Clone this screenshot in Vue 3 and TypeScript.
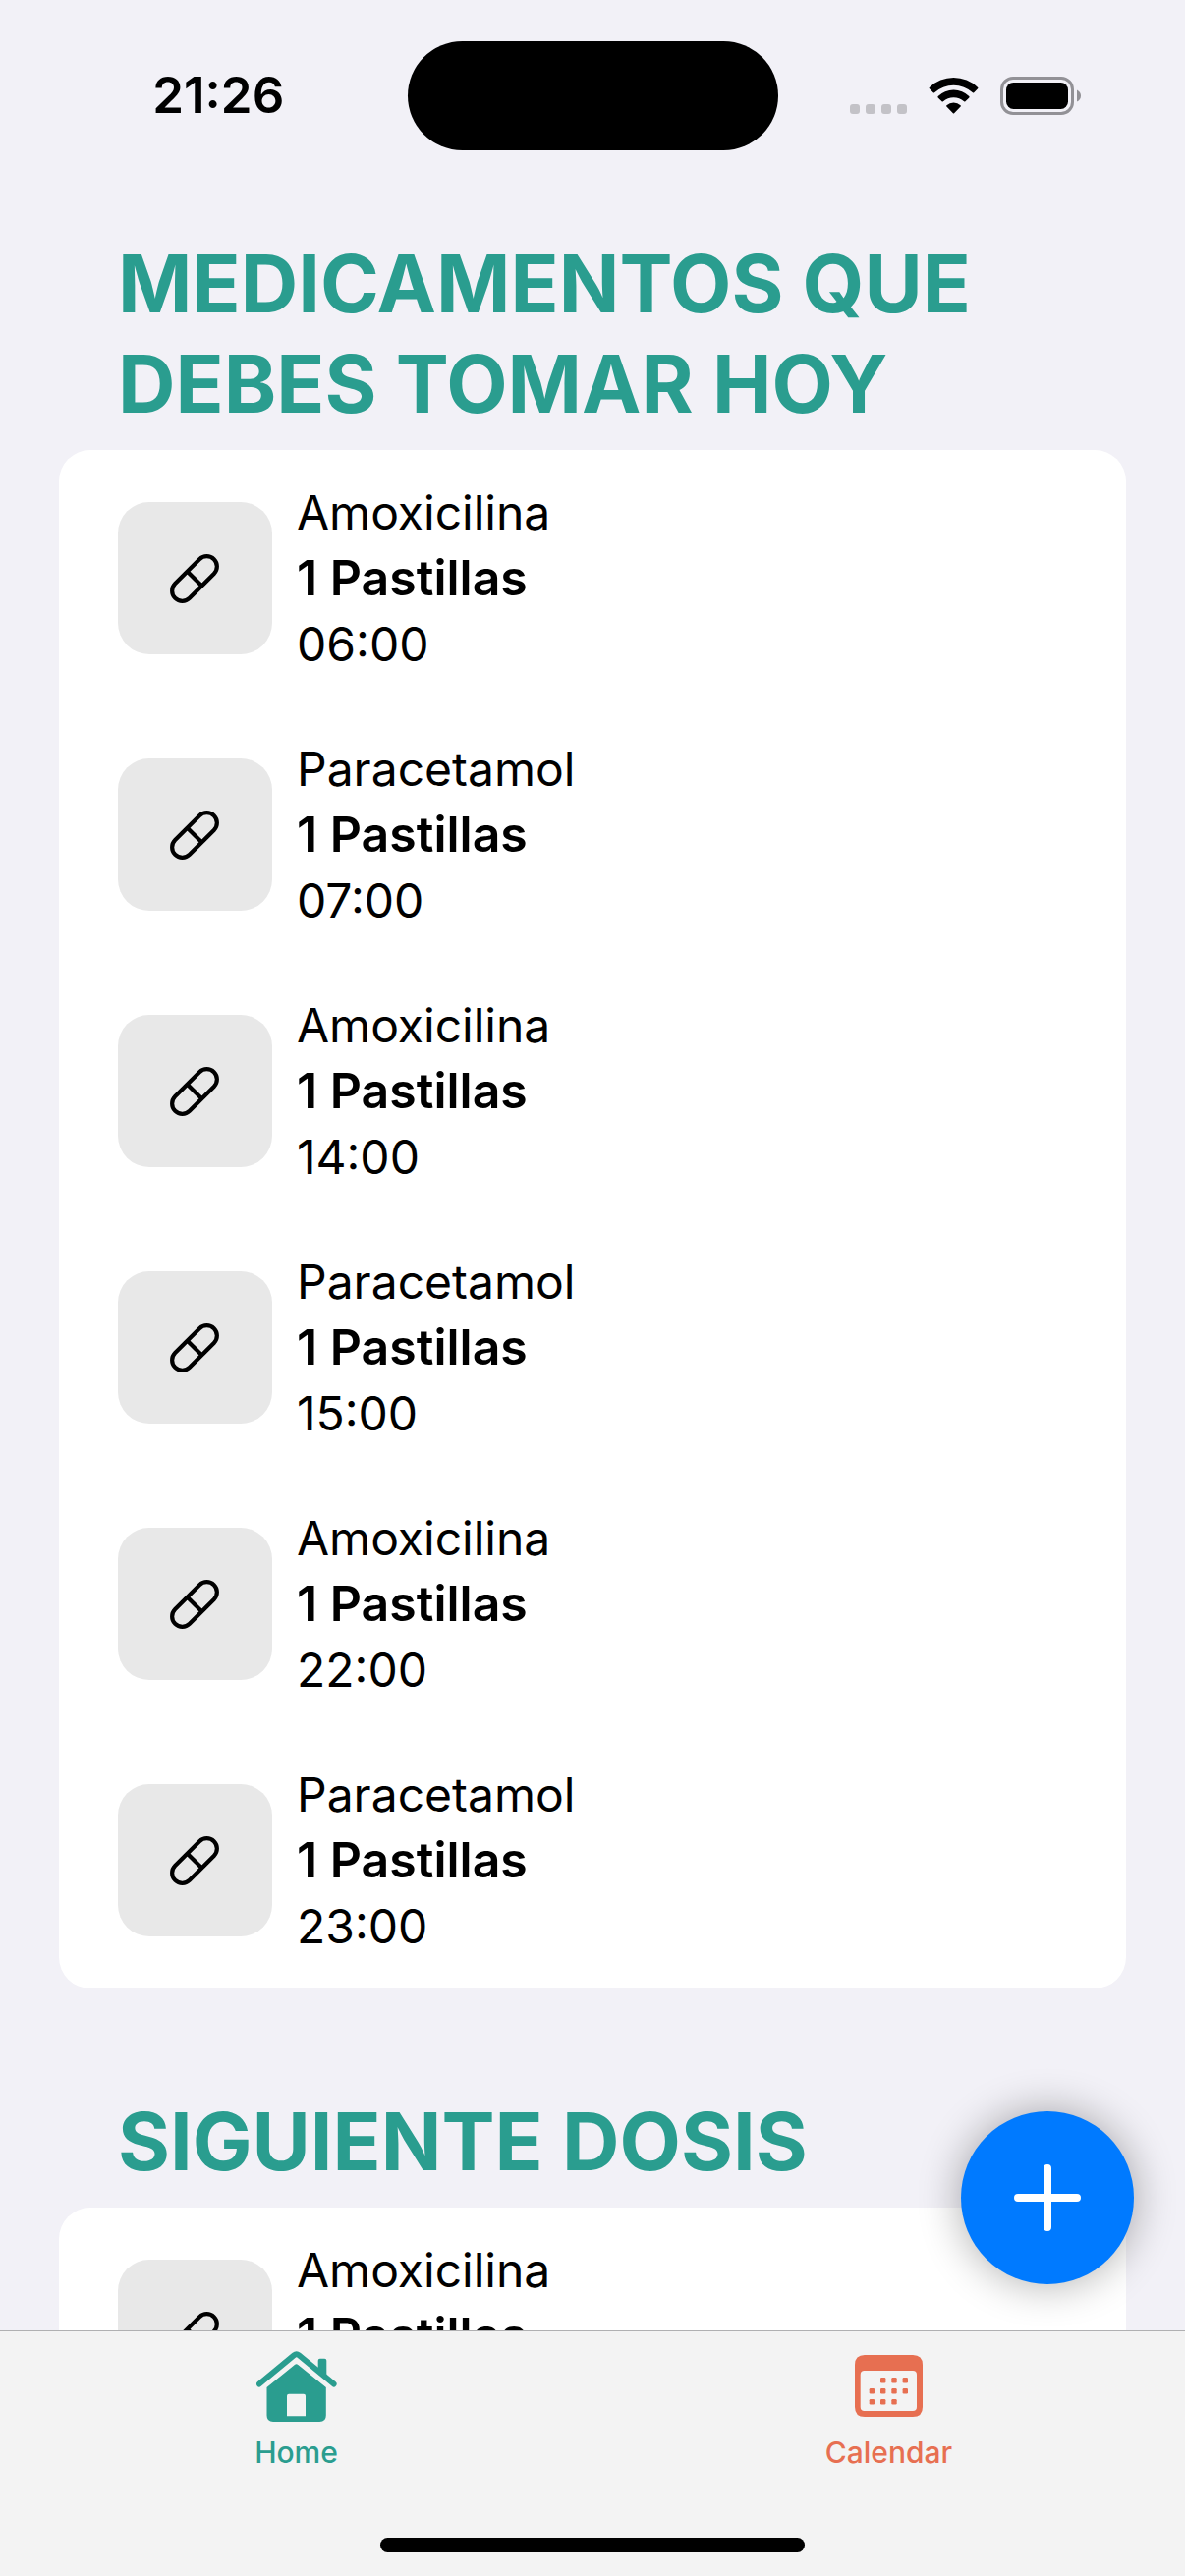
<script setup lang="ts">
interface Dose {
  name: string
  amount: string
  time?: string
}

interface Section {
  title: string
  doses: Dose[]
}

const sections: Section[] = [
  {
    title: 'MEDICAMENTOS QUE DEBES TOMAR HOY',
    doses: [
      { name: 'Amoxicilina', amount: '1 Pastillas', time: '06:00' },
      { name: 'Paracetamol', amount: '1 Pastillas', time: '07:00' },
      { name: 'Amoxicilina', amount: '1 Pastillas', time: '14:00' },
      { name: 'Paracetamol', amount: '1 Pastillas', time: '15:00' },
      { name: 'Amoxicilina', amount: '1 Pastillas', time: '22:00' },
      { name: 'Paracetamol', amount: '1 Pastillas', time: '23:00' },
    ],
  },
  {
    title: 'SIGUIENTE DOSIS',
    doses: [{ name: 'Amoxicilina', amount: '1 Pastillas' }],
  },
]

// Column and row of each day mark on the calendar icon
const calendarDays: [number, number][] = [
  [1, 0], [2, 0], [3, 0],
  [0, 1], [1, 1], [2, 1], [3, 1],
  [0, 2], [1, 2], [2, 2],
]
</script>

<template>
  <div class="screen">
    <header class="status">
      <div class="clock">21:26</div>
      <div class="island"></div>
      <div class="indicators">
        <svg width="58" height="39" viewBox="0 0 58 39" aria-hidden="true">
          <rect v-for="n in 4" :key="n" :x="(n - 1) * 16" y="28" width="10" height="10" rx="3" fill="#c3c2c7" />
        </svg>
        <svg width="51" height="39" viewBox="0 0 51 39" aria-hidden="true">
          <path d="M.9 12.3Q.2 11.6.9 10.9A35.4 35.4 0 0 1 50.1 10.9Q50.8 11.6 50.1 12.3L46.2 16.3Q45.6 16.9 44.9 16.3A29 29 0 0 0 6.1 16.3Q5.4 16.9 4.8 16.3Z" />
          <path d="M9.7 21.4Q9 20.7 9.7 20A22.5 22.5 0 0 1 41.3 20Q42 20.7 41.3 21.4L37.4 25.3Q36.8 25.9 36.1 25.3A16 16 0 0 0 14.9 25.3Q14.2 25.9 13.6 25.3Z" />
          <path d="M18.4 30.6Q17.7 29.9 18.4 29.2A10.5 10.5 0 0 1 32.6 29.2Q33.3 29.9 32.6 30.6L26.1 37.3Q25.5 37.9 24.9 37.3Z" />
        </svg>
        <svg width="82" height="39" viewBox="0 0 82 39" aria-hidden="true">
          <rect x="1.5" y="1.5" width="72" height="36" rx="11.5" fill="none" stroke="#929196" stroke-width="3" />
          <rect x="6" y="6" width="63" height="27" rx="7.5" />
          <path d="M78 13.5Q82 15.5 82 19.5T78 25.5Z" fill="#929196" />
        </svg>
      </div>
    </header>

    <main class="content">
      <section v-for="section in sections" :key="section.title" class="section">
        <h2 class="title">{{ section.title }}</h2>
        <ul class="card">
          <li v-for="(dose, i) in section.doses" :key="i" class="row">
            <div class="tile">
              <svg width="51" height="50" viewBox="0 0 51 50" aria-hidden="true">
                <g transform="rotate(-45 25 25)" fill="none" stroke="#000" stroke-width="4.2">
                  <rect x="-3" y="14.6" width="56" height="20.8" rx="10.4" />
                  <path d="M25 14.6V35.4" />
                </g>
              </svg>
            </div>
            <div class="details">
              <p class="name">{{ dose.name }}</p>
              <p class="amount">{{ dose.amount }}</p>
              <p v-if="dose.time" class="time">{{ dose.time }}</p>
            </div>
          </li>
        </ul>
      </section>
    </main>

    <footer class="dock">
      <button class="add" type="button" aria-label="Add">
        <svg width="68" height="68" viewBox="0 0 68 68" aria-hidden="true">
          <path d="M34 4V64M4 34H64" stroke="#fff" stroke-width="8" stroke-linecap="round" />
        </svg>
      </button>
      <nav class="tabs">
        <a class="tab home" href="#home">
          <span class="icon">
            <svg width="82" height="73" viewBox="0 0 82 73" fill="currentColor" aria-hidden="true">
              <path d="M2.9 34.6 38.2 5.2Q40.7 3.2 43.2 5.2L78.7 34.6" fill="none" stroke="currentColor" stroke-width="5.8" stroke-linecap="round" />
              <path d="M62.7 20V10.7Q62.7 8.7 64.7 8.7H69.3Q71.3 8.7 71.3 10.7V27Z" />
              <path fill-rule="evenodd" d="M38.9 15Q40.6 13.6 42.3 15L70.8 38V66.5Q70.8 73 64.3 73H17Q10.5 73 10.5 66.5V38ZM33 44.7Q31 44.7 31 46.7V67.3H50V46.7Q50 44.7 48 44.7Z" />
            </svg>
          </span>
          <span>Home</span>
        </a>
        <a class="tab calendar" href="#calendar">
          <span class="icon">
            <svg width="69" height="63" viewBox="0 0 69 63" fill="currentColor" aria-hidden="true">
              <path fill-rule="evenodd" d="M10 0H59Q69 0 69 10V53Q69 63 59 63H10Q0 63 0 53V10Q0 0 10 0ZM9.7 16Q5.7 16 5.7 20V53Q5.7 57 9.7 57H59Q63 57 63 53V20Q63 16 59 16Z" />
              <rect
                v-for="([col, row], i) in calendarDays"
                :key="i"
                :x="14.7 + col * 11.3"
                :y="23 + row * 11"
                width="5.4"
                height="5.4"
                rx="1.2"
              />
            </svg>
          </span>
          <span>Calendar</span>
        </a>
      </nav>
      <div class="grabber"></div>
    </footer>
  </div>
</template>

<style>
body {
  margin: 0;
}
</style>

<style scoped>
.screen {
  display: flex;
  flex-direction: column;
  height: 100vh;
  background: #f2f1f7;
  color: #000;
  font-family: Inter, "Liberation Sans", sans-serif;
}

.status {
  flex: none;
  display: grid;
  grid-template-columns: 1fr auto 1fr;
  align-items: center;
  height: 177px;
  padding-top: 17px;
  box-sizing: border-box;
}

.clock {
  padding-left: 30px;
  text-align: center;
  font-size: 51px;
  line-height: 60px;
  font-weight: 600;
}

.island {
  width: 377px;
  height: 111px;
  border-radius: 56px;
  background: #000;
}

.indicators {
  display: flex;
  justify-content: center;
  gap: 22px;
  padding-right: 32px;
}

.content {
  flex: 1;
  min-height: 0;
  overflow: hidden;
  padding: 61px 60px 0;
}

.section + .section {
  margin-top: 105px;
}

.title {
  margin: 0 60px 16px;
  color: #2a9d8f;
  font-size: 81px;
  line-height: 102px;
  font-weight: 700;
}

.card {
  margin: 0;
  padding: 0;
  list-style: none;
  border-radius: 32px;
  background: #fff;
}

.row {
  display: flex;
  gap: 25px;
  min-height: 261px;
  padding: 30px 60px;
  box-sizing: border-box;
}

.tile {
  flex: none;
  display: flex;
  align-items: center;
  justify-content: center;
  align-self: center;
  width: 157px;
  height: 155px;
  border-radius: 32px;
  background: #e8e8e8;
}

.details {
  font-size: 48px;
  line-height: 67px;
}

.details p {
  margin: 0;
}

.details .amount {
  font-size: 50px;
  font-weight: 600;
}

.dock {
  position: relative;
  flex: none;
  display: flex;
  flex-direction: column;
  align-items: center;
  padding-bottom: 24px;
  border-top: 1px solid #b0b0b2;
  background: #f3f3f3;
}

.add {
  position: absolute;
  right: 52px;
  bottom: calc(100% + 48px);
  display: flex;
  align-items: center;
  justify-content: center;
  width: 176px;
  height: 176px;
  padding: 0;
  border: 0;
  border-radius: 50%;
  background: #007aff;
  box-shadow: 0 0 44px rgba(0, 0, 0, 0.33);
}

.tabs {
  display: flex;
  align-self: stretch;
}

.tab {
  flex: 1;
  display: flex;
  flex-direction: column;
  align-items: center;
  gap: 13px;
  padding: 19px 0 69px;
  font-size: 30px;
  line-height: 36px;
  font-weight: 500;
  text-decoration: none;
}

.icon {
  display: flex;
  align-items: center;
  height: 73px;
}

.home {
  color: #2a9d8f;
}

.calendar {
  color: #e76f51;
}

.grabber {
  width: 432px;
  height: 15px;
  border-radius: 8px;
  background: #000;
}
</style>
